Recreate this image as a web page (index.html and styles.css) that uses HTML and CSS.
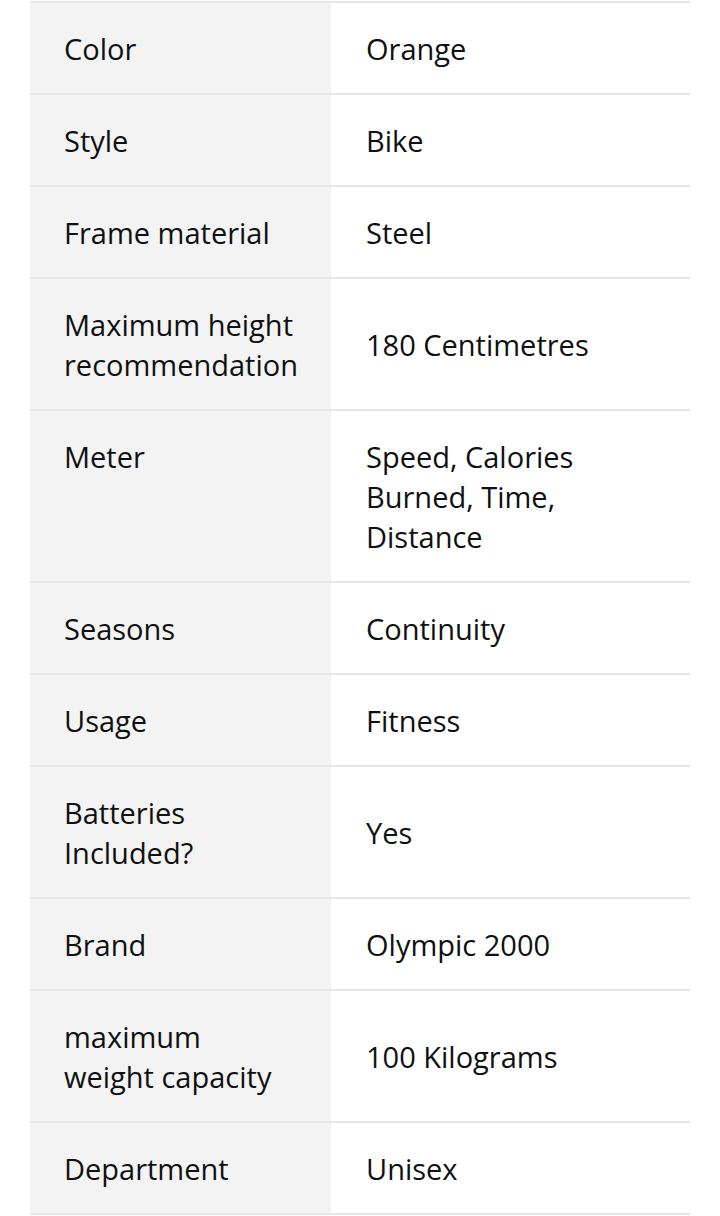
FILE: index.html
```html
<!DOCTYPE html>
<html lang="en">
<head>
<meta charset="utf-8">
<link rel="stylesheet" href="styles.css">
</head>
<body>
<table class="specs">
  <colgroup><col class="label-col"><col class="value-col"></colgroup>
  <tbody>
    <tr><th>Color</th><td>Orange</td></tr>
    <tr><th>Style</th><td>Bike</td></tr>
    <tr><th>Frame material</th><td>Steel</td></tr>
    <tr><th>Maximum height recommendation</th><td>180 Centimetres</td></tr>
    <tr><th class="top">Meter</th><td>Speed, Calories Burned, Time, Distance</td></tr>
    <tr><th>Seasons</th><td>Continuity</td></tr>
    <tr><th>Usage</th><td>Fitness</td></tr>
    <tr><th>Batteries Included?</th><td>Yes</td></tr>
    <tr><th>Brand</th><td>Olympic 2000</td></tr>
    <tr><th>maximum weight capacity</th><td>100 Kilograms</td></tr>
    <tr><th>Department</th><td>Unisex</td></tr>
  </tbody>
</table>
</body>
</html>
```
FILE: styles.css
```css
html, body {
  margin: 0;
  padding: 0;
  background: #ffffff;
}
body {
  padding: 1px 30px 0 30px;
  font-family: "Open Sans", "Noto Sans", sans-serif;
  color: #0f1111;
}
.specs {
  width: 660px;
  table-layout: fixed;
  border-collapse: collapse;
  border-top: 2px solid #e7e7e7;
}
.label-col {
  width: 301px;
}
.value-col {
  width: 359px;
}
.specs tr {
  border-bottom: 2px solid #e7e7e7;
}
.specs th,
.specs td {
  font-size: 29px;
  line-height: 40px;
  font-weight: 400;
  text-align: left;
  vertical-align: middle;
  padding: 26px 36px 24px 34px;
}
.specs th {
  background: #f3f3f3;
}
.specs th.top {
  vertical-align: top;
}
.specs td {
  padding-left: 35px;
  padding-right: 60px;
}
```
